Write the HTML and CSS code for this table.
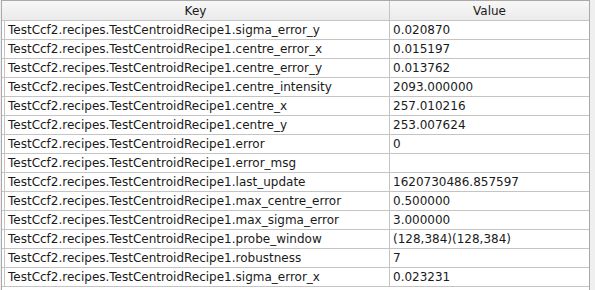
FILE: index.html
```html
<!DOCTYPE html>
<html lang="en">
<head>
    <meta charset="UTF-8">
    <title>Recipe Parameters</title>
    <link rel="stylesheet" href="styles.css">
</head>
<body>
    <!-- Key / Value view -->
    <div class="frame">
        <table class="kv-table">
            <thead>
                <tr>
                    <th class="key-col">Key</th>
                    <th class="value-col">Value</th>
                </tr>
            </thead>
            <tbody>
                <tr><td>TestCcf2.recipes.TestCentroidRecipe1.sigma_error_y</td><td>0.020870</td></tr>
                <tr><td>TestCcf2.recipes.TestCentroidRecipe1.centre_error_x</td><td>0.015197</td></tr>
                <tr><td>TestCcf2.recipes.TestCentroidRecipe1.centre_error_y</td><td>0.013762</td></tr>
                <tr><td>TestCcf2.recipes.TestCentroidRecipe1.centre_intensity</td><td>2093.000000</td></tr>
                <tr><td>TestCcf2.recipes.TestCentroidRecipe1.centre_x</td><td>257.010216</td></tr>
                <tr><td>TestCcf2.recipes.TestCentroidRecipe1.centre_y</td><td>253.007624</td></tr>
                <tr><td>TestCcf2.recipes.TestCentroidRecipe1.error</td><td>0</td></tr>
                <tr><td>TestCcf2.recipes.TestCentroidRecipe1.error_msg</td><td></td></tr>
                <tr><td>TestCcf2.recipes.TestCentroidRecipe1.last_update</td><td>1620730486.857597</td></tr>
                <tr><td>TestCcf2.recipes.TestCentroidRecipe1.max_centre_error</td><td>0.500000</td></tr>
                <tr><td>TestCcf2.recipes.TestCentroidRecipe1.max_sigma_error</td><td>3.000000</td></tr>
                <tr><td>TestCcf2.recipes.TestCentroidRecipe1.probe_window</td><td>(128,384)(128,384)</td></tr>
                <tr><td>TestCcf2.recipes.TestCentroidRecipe1.robustness</td><td>7</td></tr>
                <tr><td>TestCcf2.recipes.TestCentroidRecipe1.sigma_error_x</td><td>0.023231</td></tr>
            </tbody>
        </table>
    </div>
</body>
</html>
```

FILE: styles.css
```css
body {
    margin: 0;
    padding: 0 5px 0 1px;
    background-color: #efefef;
    font-family: 'DejaVu Sans', sans-serif;
    font-size: 12px;
    color: #1a1a1a;
    overflow: hidden;
}

/* Frame round the view */
.frame {
    border: 1px solid #a9a9a9;
    border-bottom: none;
    background-color: #ffffff;
    height: 300px;
}

.kv-table {
    width: 100%;
    border-collapse: collapse;
    table-layout: fixed;
}

/* Header */
.kv-table th {
    height: 18px;
    padding: 1px 0 0 0;
    font-weight: normal;
    text-align: center;
    background: linear-gradient(#f7f7f7, #ebebeb);
    border-bottom: 1px solid #c4c4c4;
    border-right: 1px solid #c4c4c4;
}

.kv-table th.key-col {
    width: 387px;
}

.kv-table th:last-child {
    border-right: none;
}

/* Rows */
.kv-table td {
    height: 18px;
    padding: 0 0 0 6px;
    white-space: nowrap;
    overflow: hidden;
    border-bottom: 1px solid #c4c4c4;
    border-right: 1px solid #c4c4c4;
}

/* inner grid line a few px in from the frame */
.kv-table td:first-child {
    background: linear-gradient(to right, #ffffff 2px, #c4c4c4 2px, #c4c4c4 3px, #ffffff 3px);
}

.kv-table td:last-child {
    border-right: none;
    padding-left: 3px;
}
```
